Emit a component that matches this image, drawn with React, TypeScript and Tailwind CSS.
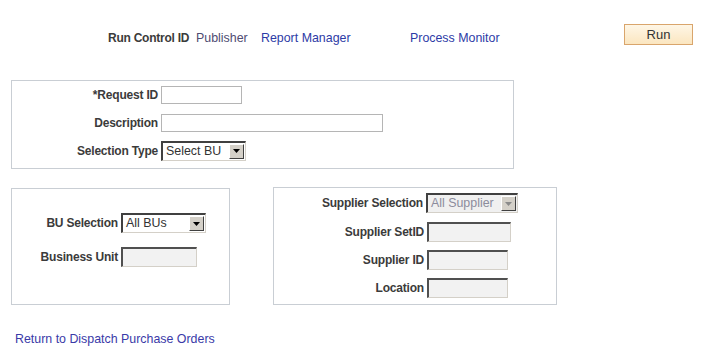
import React from 'react';

const labelCls = 'text-right pr-[3px] font-bold text-[12px] tracking-[-0.2px] text-[#3b3b3b] whitespace-nowrap';

function TextBox({ width, disabled = false }: { width: string; disabled?: boolean }) {
  if (disabled) {
    return (
      <div
        className={`${width} h-[20px] border-t-2 border-l-2 border-r border-b border-t-[#505050] border-l-[#505050] border-r-[#d4d0c8] border-b-[#d4d0c8] bg-[#f2f2f2]`}
      />
    );
  }
  return <div className={`${width} h-[18px] border border-[#b5b5b5] bg-white`} />;
}

function SelectBox({
  width,
  height,
  value,
  disabled = false,
}: {
  width: string;
  height: string;
  value: string;
  disabled?: boolean;
}) {
  return (
    <div
      className={`${width} ${height} flex items-stretch border-t-2 border-l-2 border-r border-b border-t-[#404040] border-l-[#404040] border-r-[#d4d0c8] border-b-[#d4d0c8] ${
        disabled ? 'bg-[#f0f0f0]' : 'bg-white'
      }`}
    >
      <span
        className={`flex-1 pl-[3px] leading-[17px] whitespace-nowrap overflow-hidden ${
          disabled ? 'text-[#8c8c9c]' : 'text-[#333]'
        }`}
      >
        {value}
      </span>
      <span className="my-px mr-px flex w-[15px] items-center justify-center border border-t-white border-l-white border-r-[#404040] border-b-[#404040] bg-[#d4d0c8]">
        <svg width="7" height="4" viewBox="0 0 7 4">
          <path d="M0 0 H7 L3.5 4 Z" fill={disabled ? '#8a8a8a' : '#000'} />
        </svg>
      </span>
    </div>
  );
}

export default function App() {
  return (
    <div className="min-h-[349px] w-[706px] bg-white font-['Liberation_Sans',Arial,sans-serif] text-[12.4px] leading-[14px]">
      {/* Header */}
      <div className="flex items-start pt-[24px]">
        <span className="ml-[108px] mt-[7px] w-[88px] text-[12px] font-bold tracking-[-0.25px] text-[#3b3b3b]">Run Control ID</span>
        <span className="mt-[7px] w-[65px] text-[#4f4b72]">Publisher</span>
        <a className="mt-[7px] w-[149px] text-[#2d3ba6]">Report Manager</a>
        <a className="mt-[7px] w-[214px] text-[#2d3ba6]">Process Monitor</a>
        <button className="h-[21px] w-[69px] border border-[#d9a56c] bg-gradient-to-b from-[#fef6e6] to-[#fbe6c0] text-[13px] text-[#333]">
          Run
        </button>
      </div>

      {/* Request box */}
      <div className="ml-[11px] mt-[35px] h-[89px] w-[503px] border border-[#c9ced4] pt-[5px]">
        <div className="flex h-[18px] items-center">
          <span className={`w-[149px] ${labelCls}`}>*Request ID</span>
          <TextBox width="w-[81px]" />
        </div>
        <div className="mt-[10px] flex h-[18px] items-center">
          <span className={`w-[149px] ${labelCls}`}>Description</span>
          <TextBox width="w-[222px]" />
        </div>
        <div className="mt-[9px] flex h-[19px] items-center">
          <span className={`w-[149px] ${labelCls}`}>Selection Type</span>
          <SelectBox width="w-[85px]" height="h-[20px]" value="Select BU" />
        </div>
      </div>

      {/* Selection boxes */}
      <div className="mt-[19px] flex items-start">
        <div className="ml-[11px] h-[117px] w-[219px] border border-[#c9ced4] pt-[24px]">
          <div className="flex h-[20px] items-center">
            <span className={`w-[109px] ${labelCls}`}>BU Selection</span>
            <SelectBox width="w-[85px]" height="h-[20px]" value="All BUs" />
          </div>
          <div className="mt-[14px] flex h-[20px] items-center">
            <span className={`w-[109px] ${labelCls}`}>Business Unit</span>
            <TextBox width="w-[76px]" disabled />
          </div>
        </div>

        <div className="-mt-px ml-[43px] h-[118px] w-[284px] border border-[#c9ced4] pt-[5px]">
          <div className="flex h-[20px] items-center">
            <span className={`w-[152px] ${labelCls}`}>Supplier Selection</span>
            <SelectBox width="w-[92px]" height="h-[20px]" value="All Supplier" disabled />
          </div>
          <div className="mt-[9px] flex h-[20px] items-center">
            <span className={`w-[153px] ${labelCls}`}>Supplier SetID</span>
            <TextBox width="w-[84px]" disabled />
          </div>
          <div className="mt-[8px] flex h-[20px] items-center">
            <span className={`w-[153px] ${labelCls}`}>Supplier ID</span>
            <TextBox width="w-[81px]" disabled />
          </div>
          <div className="mt-[8px] flex h-[20px] items-center">
            <span className={`w-[153px] ${labelCls}`}>Location</span>
            <TextBox width="w-[81px]" disabled />
          </div>
        </div>
      </div>

      {/* Footer link */}
      <div className="ml-[15px] mt-[27px]">
        <a className="text-[#3a3aa8]">Return to Dispatch Purchase Orders</a>
      </div>
    </div>
  );
}
